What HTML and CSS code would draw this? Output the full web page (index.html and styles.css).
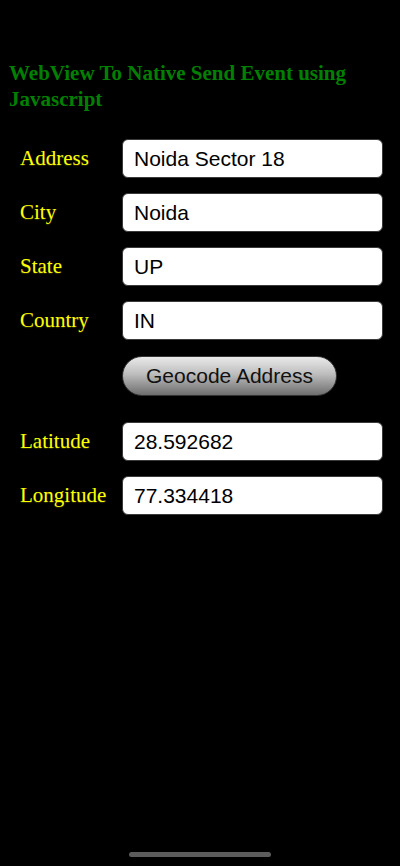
FILE: index.html
```html
<!DOCTYPE html>
<html>
<head>
<meta charset="utf-8">
<link rel="stylesheet" href="styles.css">
</head>
<body>
<h1 class="title">WebView To Native Send Event using Javascript</h1>
<div class="form">
  <label class="lbl">Address</label><input class="field" value="Noida Sector 18">
  <label class="lbl">City</label><input class="field" value="Noida">
  <label class="lbl">State</label><input class="field" value="UP">
  <label class="lbl">Country</label><input class="field" value="IN">
  <div class="btn-row"><button class="btn">Geocode Address</button></div>
  <label class="lbl">Latitude</label><input class="field" value="28.592682">
  <label class="lbl">Longitude</label><input class="field" value="77.334418">
</div>
<div class="home"></div>
</body>
</html>
```
FILE: styles.css
```css
html, body {
  margin: 0;
  padding: 0;
  background: #000;
  height: 100%;
}
body {
  font-family: "Liberation Serif", "Times New Roman", serif;
}
.title {
  margin: 0;
  padding: 60px 9px 0 9px;
  color: #008000;
  font-size: 21px;
  line-height: 26px;
  font-weight: bold;
}
.form {
  display: grid;
  grid-template-columns: 102px 261px;
  row-gap: 15px;
  padding: 27px 0 0 20px;
  align-items: center;
}
.lbl {
  color: #ffff00;
  font-size: 21px;
  text-shadow: 0 1px 1px rgba(80,80,0,0.6);
}
.field {
  box-sizing: border-box;
  width: 261px;
  height: 39px;
  margin: 0;
  border: 1px solid #3a3a3a;
  border-radius: 6px;
  background: #fff;
  padding: 0 11px;
  font-family: "Liberation Sans", Arial, sans-serif;
  font-size: 21px;
  color: #000;
  outline: none;
}
.btn-row {
  grid-column: 2;
  margin: 1px 0 11px 0;
}
.btn {
  box-sizing: border-box;
  width: 215px;
  height: 40px;
  border: 1px solid #333;
  border-radius: 20px;
  background: linear-gradient(to bottom, #eaeaea 0%, #bdbdbd 45%, #8a8a8a 80%, #6e6e6e 100%);
  font-family: "Liberation Sans", Arial, sans-serif;
  font-size: 21px;
  color: #111;
  padding: 0;
}
.home {
  position: fixed;
  left: 129px;
  top: 852px;
  width: 142px;
  height: 5px;
  border-radius: 3px;
  background: #5c5c5c;
}
```
